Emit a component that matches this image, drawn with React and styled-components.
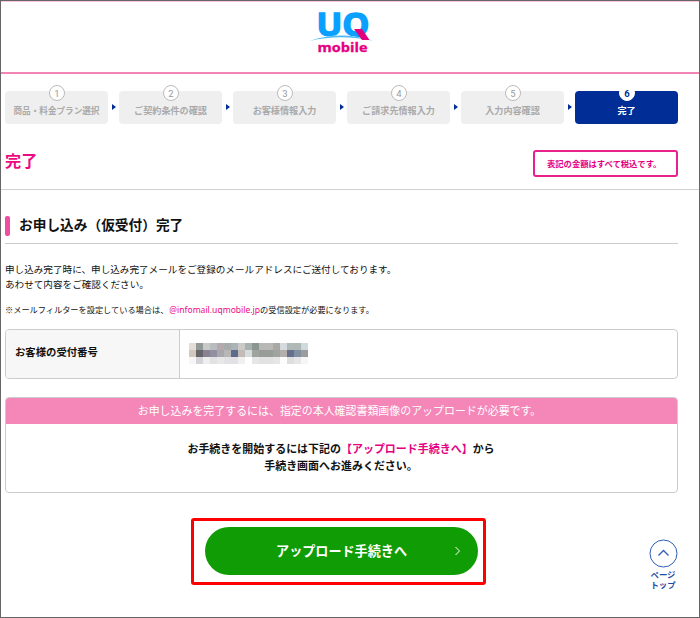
import React from "react";
import styled, { createGlobalStyle, css } from "styled-components";

const Global = createGlobalStyle`
  * { box-sizing: border-box; }
  body { margin: 0; background: #fff; }
  h1, h2, p, ol, dl, dt, dd { margin: 0; padding: 0; }
`;

const Page = styled.div`
  position: relative;
  width: 700px;
  height: 618px;
  overflow: hidden;
  border: 1px solid #666;
  background: #fff;
  color: #111;
  font-family: "Noto Sans CJK JP", sans-serif;
`;

const Header = styled.header`
  height: 73px;
  display: flex;
  justify-content: center;
  border-top: 1px solid #f9c6de;
  border-bottom: 2px solid #f285b6;
`;

const Logo = styled.svg`
  display: block;
  width: 70px;
  height: 56px;
  margin: 2px 0 0 -18px;
  overflow: visible;
`;

const Steps = styled.ol`
  display: flex;
  align-items: center;
  justify-content: space-between;
  list-style: none;
  width: 673px;
  height: 34px;
  margin: 16px 0 0 4px;
`;

const Step = styled.li`
  position: relative;
  width: 103px;
  height: 33px;
  padding-top: 13px;
  border-radius: 4px;
  text-align: center;
  white-space: nowrap;
  font-size: ${(p) => p.$size || 9.1}px;
  line-height: 13px;
  font-weight: 700;
  background: ${(p) => (p.$active ? "#002d96" : "#efefef")};
  color: ${(p) => (p.$active ? "#fff" : "#aaa")};
`;

const StepNumber = styled.span`
  position: absolute;
  top: -6px;
  left: 44px;
  width: 16px;
  height: 16px;
  border: 1px solid ${(p) => (p.$active ? "#fff" : "#bbb")};
  border-radius: 50%;
  background: #fff;
  color: ${(p) => (p.$active ? "#002d96" : "#999")};
  font: ${(p) => (p.$active ? 700 : 400)} 9.5px/15px Roboto, sans-serif;
`;

const StepArrow = styled.li`
  width: 0;
  height: 0;
  border: solid transparent;
  border-width: 3.5px 0 3.5px 4px;
  border-left-color: #002d96;
`;

const TitleBar = styled.div`
  display: flex;
  align-items: center;
  justify-content: space-between;
  height: 66px;
  padding: 13px 21px 0 4px;
  border-bottom: 1px solid #d0d0d0;
`;

const Title = styled.h1`
  margin-top: -6px;
  font-size: 16.2px;
  line-height: 20px;
  color: #eb0a83;
`;

const TaxNote = styled.p`
  width: 145px;
  height: 27px;
  padding-left: 12px;
  border: 2px solid #e9218a;
  border-radius: 3px;
  font-size: 8.3px;
  line-height: 22px;
  font-weight: 700;
  color: #e5007f;
  white-space: nowrap;
`;

const Content = styled.main`
  width: 673px;
  margin-left: 4px;
`;

const SectionTitle = styled.h2`
  display: flex;
  align-items: center;
  gap: 9px;
  height: 54px;
  padding-top: 14px;
  border-bottom: 1px solid #ccc;
  font-size: 13.7px;
  line-height: 20px;
  &::before {
    content: "";
    width: 5px;
    height: 20px;
    margin-top: 5px;
    border-radius: 2px;
    background: #f04ca2;
  }
`;

const Lead = styled.p`
  margin-top: 18px;
  font-size: 9.6px;
  line-height: 15px;
  white-space: nowrap;
`;

const Note = styled.p`
  margin-top: 9px;
  font-size: 8.2px;
  line-height: 16px;
  white-space: nowrap;
`;

const Mail = styled.span`
  margin-left: 1px;
  font-family: "Noto Sans", sans-serif;
  font-size: 8.55px;
  color: #eb0a83;
`;

const bordered = css`
  border: 1px solid #ccc;
  border-radius: 4px;
  overflow: hidden;
`;

const Receipt = styled.dl`
  ${bordered}
  display: flex;
  height: 50px;
  margin-top: 11px;
`;

const ReceiptLabel = styled.dt`
  width: 174px;
  padding-left: 9px;
  border-right: 1px solid #ccc;
  background: #f7f7f7;
  font-size: 10.35px;
  line-height: 44px;
  font-weight: 700;
`;

const ReceiptValue = styled.dd`
  padding: 13px 0 0 9px;
`;

const Mosaic = styled.div`
  display: grid;
  grid-template-columns: repeat(17, 7px);
  grid-auto-rows: 7px;
`;

const Tile = styled.i`
  background: ${(p) => p.$c};
`;

const Notice = styled.section`
  ${bordered}
  height: 96px;
  margin-top: 18px;
  text-align: center;
`;

const NoticeHead = styled.p`
  height: 27px;
  margin: -1px -1px 0;
  padding-right: 4px;
  background: #f487b8;
  color: #fff;
  font-size: 10.95px;
  line-height: 27px;
  white-space: nowrap;
`;

const NoticeBody = styled.p`
  padding: 16px 1px 0 0;
  font-size: 10.98px;
  line-height: 17px;
  font-weight: 700;
`;

const Pink = styled.span`
  color: #e5007f;
`;

const Footer = styled.footer`
  display: flex;
  align-items: flex-start;
  padding: 25px 0 0 190px;
`;

const Highlight = styled.div`
  width: 295px;
  height: 67px;
  padding: 6px 0 0 11px;
  border: 3px solid #f00;
  border-radius: 3px;
`;

const UploadButton = styled.button`
  display: flex;
  align-items: center;
  justify-content: flex-end;
  width: 273px;
  height: 48px;
  padding: 0 17px 0 0;
  border: 0;
  border-radius: 24px;
  background: #109c04;
  color: #fff;
  font: 700 13.1px/20px "Noto Sans CJK JP", sans-serif;
  gap: 47px;
  white-space: nowrap;
`;

const PageTop = styled.a`
  display: flex;
  flex-direction: column;
  align-items: center;
  width: 40px;
  margin: 21px 0 0 157px;
  color: #1a4aa8;
  font-size: 8.4px;
  line-height: 10px;
  font-weight: 700;
`;

const TopIcon = styled.svg`
  display: block;
  width: 29px;
  height: 29px;
  margin-bottom: 1px;
`;

const steps = [
  ["商品・料金プラン選択", 8.6],
  ["ご契約条件の確認"],
  ["お客様情報入力"],
  ["ご請求先情報入力"],
  ["入力内容確認"],
  ["完了"],
];

const tiles = [
  "#e3ddd6 #929898 #c8cac8 #b8bcc0 #b4aaae #a6acac #aab4b8 #cccac8 #a8b0b0 #8c9690 #b8b8b8 #b8b8b6 #a8a8a4 #d4dade #b0b8b8 #b0b8b6 #d0dade",
  "#d0c8be #66666a #8a8290 #9090a0 #a8a8ac #b8b6b6 #5c6c8c #c4bab6 #d4dede #a0a49e #989c98 #989c98 #a0a4a0 #b4aeac #64708c #8090a0 #9c9c9c",
  "#f6f6f6 #d4d4d8 #eeeeee #e2e2e4 #e8e8e8 #e2e2e4 #e2e2e4 #f0f0f0 #ffffff #e6e6e8 #e2e2e2 #e2e2e2 #e6e6e6 #fdfdfd #dedede #e6e6e6 #f6f6f6",
].join(" ").split(" ");

export default function App() {
  return (
    <>
      <Global />
      <Page lang="ja">
        <Header>
          <Logo viewBox="306 4 70 56" role="img" aria-label="UQ mobile">
            <text
              x="316.500" y="36" textLength="53" lengthAdjust="spacingAndGlyphs"
              fill="#0aa0ff" stroke="#0aa0ff" strokeWidth="1.400"
              fontFamily="Open Sans" fontWeight="700" fontSize="32.500"
            >
              UQ
            </text>
            <path d="M309.500 41Q341 30 373.500 41V46H309.500Z" fill="#fff" />
            <path d="M309.500 41Q341 30 373.500 41Q341 33.500 309.500 41Z" fill="#4dbcf5" />
            <path d="M354 29h8l7.500 11h-7.500z" fill="#e5007f" />
            <text
              x="317.500" y="52" textLength="50" lengthAdjust="spacingAndGlyphs"
              fill="#e5007f" stroke="#e5007f" strokeWidth="0.300"
              fontFamily="Open Sans" fontWeight="700" fontSize="12.500"
            >
              mobile
            </text>
          </Logo>
        </Header>
        <Steps>
          {steps.map(([label, size], i) => (
            <React.Fragment key={label}>
              {i > 0 && <StepArrow />}
              <Step $size={size} $active={i === 5}>
                <StepNumber $active={i === 5}>{i + 1}</StepNumber>
                {label}
              </Step>
            </React.Fragment>
          ))}
        </Steps>
        <TitleBar>
          <Title>完了</Title>
          <TaxNote>表記の金額はすべて税込です。</TaxNote>
        </TitleBar>
        <Content>
          <SectionTitle>お申し込み（仮受付）完了</SectionTitle>
          <Lead>
            申し込み完了時に、申し込み完了メールをご登録のメールアドレスにご送付しております。
            <br />
            あわせて内容をご確認ください。
          </Lead>
          <Note>
            ※メールフィルターを設定している場合は、<Mail>@infomail.uqmobile.jp</Mail>の受信設定が必要になります。
          </Note>
          <Receipt>
            <ReceiptLabel>お客様の受付番号</ReceiptLabel>
            <ReceiptValue>
              <Mosaic>
                {tiles.map((c, i) => <Tile key={i} $c={c} />)}
              </Mosaic>
            </ReceiptValue>
          </Receipt>
          <Notice>
            <NoticeHead>お申し込みを完了するには、指定の本人確認書類画像のアップロードが必要です。</NoticeHead>
            <NoticeBody>
              お手続きを開始するには下記の<Pink>【アップロード手続きへ】</Pink>から
              <br />
              手続き画面へお進みください。
            </NoticeBody>
          </Notice>
        </Content>
        <Footer>
          <Highlight>
            <UploadButton>
              アップロード手続きへ
              <svg width="7" height="10" viewBox="0 0 7 10" fill="none" stroke="#fff">
                <path d="M1.500 1l4 4-4 4" />
              </svg>
            </UploadButton>
          </Highlight>
          <PageTop>
            <TopIcon viewBox="0 0 29 29" fill="none" stroke="#2f5cb5">
              <circle cx="14.500" cy="14.500" r="13.500" />
              <path d="M9.500 16.500l5-5 5 5" strokeWidth="1.300" />
            </TopIcon>
            <span>ページ</span>
            <span>トップ</span>
          </PageTop>
        </Footer>
      </Page>
    </>
  );
}
